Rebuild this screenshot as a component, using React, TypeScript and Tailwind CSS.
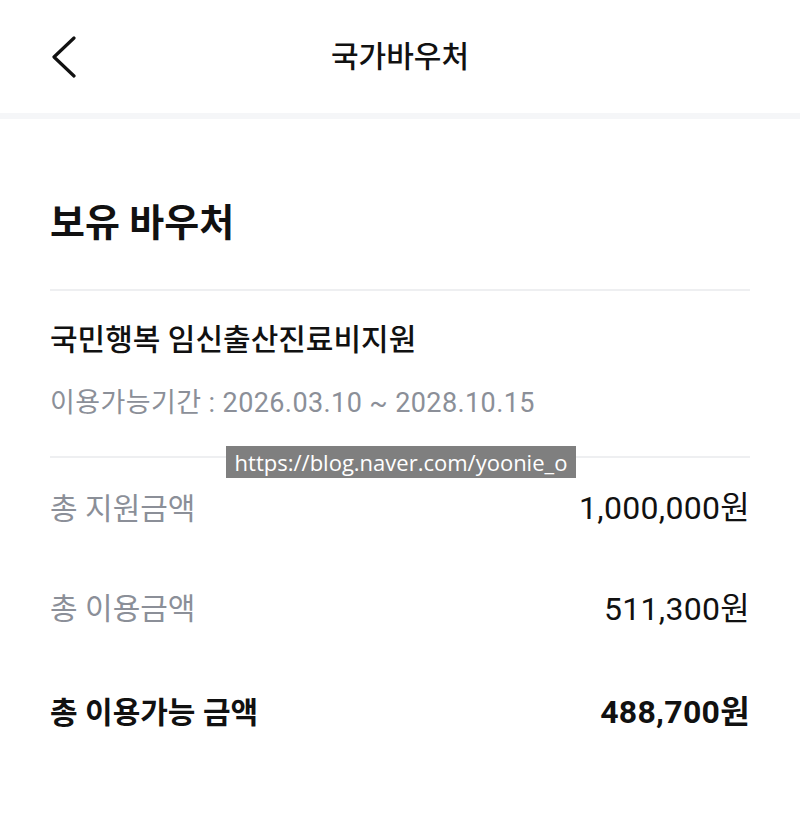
const FONT = "font-['Roboto','Noto_Sans_CJK_KR',sans-serif]";

const ROWS = [
  { label: "총 지원금액", value: "1,000,000원", strong: false },
  { label: "총 이용금액", value: "511,300원", strong: false },
  { label: "총 이용가능 금액", value: "488,700원", strong: true },
];

function BackIcon() {
  return (
    <svg width="26" height="42" viewBox="0 0 26 42" fill="none">
      <path d="M23 2 L3 21 L23 40" stroke="#111" strokeWidth="3.2" strokeLinecap="round" strokeLinejoin="round" />
    </svg>
  );
}

export default function App() {
  return (
    <div className={`relative w-[800px] min-h-[819px] bg-white text-[#111] ${FONT}`}>
      {/* Header */}
      <header className="grid h-[113px] grid-cols-[1fr_auto_1fr] items-center px-[51px]">
        <button className="flex items-center">
          <BackIcon />
        </button>
        <h1 className="text-[30px] font-medium">국가바우처</h1>
        <div />
      </header>
      <div className="h-[6px] bg-[#f5f6f8]" />

      <main className="px-[50px]">
        <h2 className="pt-[79px] text-[38px] leading-[50px] font-bold">보유 바우처</h2>
        <div className="mt-[41px] h-[2px] bg-[#eeeff1]" />

        <p className="mt-[30px] text-[30px] leading-[38px] font-medium">국민행복 임신출산진료비지원</p>
        <p className="mt-[27px] text-[27px] leading-[34px] tracking-[0.4px] text-[#8b8f98]">
          이용가능기간 : 2026.03.10 ~ 2028.10.15
        </p>
        <div className="mt-[36px] h-[2px] bg-[#eeeff1]" />

        {ROWS.map((r, i) => (
          <div
            key={r.label}
            className={`flex items-center justify-between ${i === 0 ? "h-[100px]" : i === 2 ? "h-[106px]" : "h-[101px]"}`}
          >
            <span className={`text-[30px] ${r.strong ? "font-bold text-[#111]" : "text-[#8b8f98]"}`}>
              {r.label}
            </span>
            <span className={`text-[32px] tracking-[0.3px] ${r.strong ? "font-bold" : ""}`}>{r.value}</span>
          </div>
        ))}
      </main>

      {/* blog watermark */}
      <div className="absolute left-[226px] top-[446px] flex h-[32px] w-[350px] items-center justify-center bg-[#7f7f7f]">
        <span className="font-['Open_Sans',sans-serif] text-[22px] text-white">https://blog.naver.com/yoonie_o</span>
      </div>
    </div>
  );
}
